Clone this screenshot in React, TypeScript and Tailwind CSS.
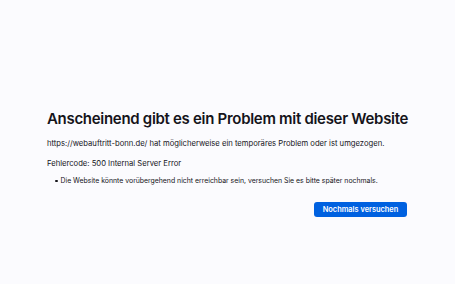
export default function App() {
  return (
    <div className="w-[455px] h-[284px] bg-[#fbfbfe] flex flex-col items-start pt-[110px] pl-[47px] pr-[47px] text-[#15141a] font-['Inter','Liberation_Sans',sans-serif] whitespace-nowrap">
      <h1 className="text-[15px] font-semibold leading-[18px] tracking-[-0.3px]">
        Anscheinend gibt es ein Problem mit dieser Website
      </h1>
      <p className="mt-[10px] text-[7.65px] leading-[12px]">
        https://webauftritt-bonn.de/ hat möglicherweise ein temporäres Problem oder ist umgezogen.
      </p>
      <p className="mt-[8px] text-[7.65px] leading-[12px]">Fehlercode: 500 Internal Server Error</p>
      <ul className="mt-[6px] pl-[8px] text-[6.9px] leading-[10px]">
        <li className="flex items-center gap-[3px]">
          <span className="w-[2.5px] h-[2.5px] rounded-full bg-[#15141a]" />
          <span>Die Website könnte vorübergehend nicht erreichbar sein, versuchen Sie es bitte später nochmals.</span>
        </li>
      </ul>
      <div className="flex justify-end self-stretch mt-[16px] pr-[1px]">
        <button className="bg-[#0061e0] text-white text-[7.4px] font-semibold rounded-[3px] w-[93px] h-[15px]">
          Nochmals versuchen
        </button>
      </div>
    </div>
  );
}
